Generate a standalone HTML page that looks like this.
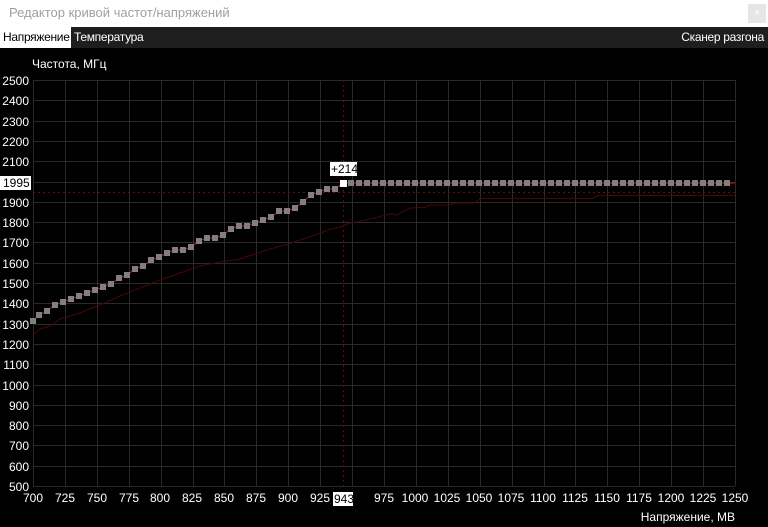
<!DOCTYPE html>
<html><head><meta charset="utf-8"><style>
body{margin:0;width:768px;height:527px;background:#000;overflow:hidden;font-family:"Liberation Sans",sans-serif;}
.title{position:absolute;left:0;top:0;width:768px;height:27px;background:#fff;}
.title span{position:absolute;left:9px;top:5px;font-size:13px;color:#a0a0a0;}
.close{position:absolute;left:748px;top:4px;width:18px;height:19px;background:#e6e6e6;color:#fff;font-size:10px;text-align:center;line-height:19px;}
.tabs{position:absolute;left:0;top:27px;width:768px;height:21px;background:#1e1e1e;font-size:12px;color:#fff;letter-spacing:-0.3px;}
.t1{position:absolute;left:0;top:0;height:21px;width:71px;background:#fff;color:#000;line-height:21px;padding-left:3px;box-sizing:border-box;}
.t2{position:absolute;left:74px;top:0;line-height:21px;}
.t3{position:absolute;right:4px;top:0;line-height:21px;}
svg{position:absolute;left:0;top:0;}
text{font-family:"Liberation Sans",sans-serif;font-size:12px;fill:#fff;}
</style></head><body>
<div class="title"><span>Редактор кривой частот/напряжений</span><div class="close">×</div></div>
<div class="tabs"><div class="t1">Напряжение</div><div class="t2">Температура</div><div class="t3">Сканер разгона</div></div>
<svg width="768" height="527" id="s">
<g id="grid" stroke="#2a2a2a" stroke-width="1"></g>
<text x="32" y="68">Частота, МГц</text>
<g text-anchor="end" id="yl">
<text x="29" y="85">2500</text><text x="29" y="105">2400</text><text x="29" y="126">2300</text><text x="29" y="146">2200</text><text x="29" y="166">2100</text><text x="29" y="207">1900</text><text x="29" y="227">1800</text><text x="29" y="247">1700</text><text x="29" y="268">1600</text><text x="29" y="288">1500</text><text x="29" y="308">1400</text><text x="29" y="329">1300</text><text x="29" y="349">1200</text><text x="29" y="369">1100</text><text x="29" y="390">1000</text><text x="29" y="410">900</text><text x="29" y="430">800</text><text x="29" y="450">700</text><text x="29" y="471">600</text><text x="29" y="491">500</text>
</g>
<g text-anchor="middle">
<text x="33" y="502">700</text><text x="65" y="502">725</text><text x="97" y="502">750</text><text x="129" y="502">775</text><text x="160" y="502">800</text><text x="192" y="502">825</text><text x="224" y="502">850</text><text x="256" y="502">875</text><text x="288" y="502">900</text><text x="320" y="502">925</text><text x="384" y="502">975</text><text x="415" y="502">1000</text><text x="447" y="502">1025</text><text x="479" y="502">1050</text><text x="511" y="502">1075</text><text x="543" y="502">1100</text><text x="575" y="502">1125</text><text x="607" y="502">1150</text><text x="639" y="502">1175</text><text x="671" y="502">1200</text><text x="703" y="502">1225</text><text x="735" y="502">1250</text>
</g>
<line x1="343.5" y1="80" x2="343.5" y2="486" stroke="#6a0a0a" stroke-dasharray="2,3"/>
<line x1="33" y1="192.5" x2="735" y2="192.5" stroke="#6a0a0a" stroke-dasharray="2,3"/>
<polyline fill="none" stroke="#4a0606" stroke-width="1" points="33,335 40,329 50,326 60,319 80,313 100,305 120,296 140,288 160,280 180,273 200,266 220,262 240,259 255,254 270,249 285,245 300,240 315,235 331,229 340,227 350,223 357,222 370,219 380,216.5 390,214 397,215 410,208 425,207.5 430,205 450,205 455,203 475,203 480,198.5 592,198.5 598,195.5 735,195.5"/>
<polyline id="rl" fill="none" stroke="#d01010" stroke-width="1"></polyline>
<g id="pts" fill="#808080"></g>
<rect x="333" y="492" width="20" height="14" fill="#fff"/><text x="334" y="503" style="fill:#000">943</text>
<rect x="0" y="176" width="31" height="14" fill="#fff"/><text x="3" y="187" style="fill:#000">1995</text>
<rect x="330" y="162" width="27" height="14" fill="#fff"/><text x="331" y="173" style="fill:#000">+214</text>
<text x="735" y="521" text-anchor="end">Напряжение, МВ</text>
</svg>
<script>
var g=document.getElementById('grid'),h='';
for(var i=0;i<=22;i++){var x=Math.round(33+i*702/22)+.5;h+='<line x1="'+x+'" y1="80" x2="'+x+'" y2="486"/>';}
for(var j=0;j<=20;j++){var y=Math.round(80+j*20.3)+.5;h+='<line x1="33" y1="'+y+'" x2="735" y2="'+y+'"/>';}
g.innerHTML=h;
var tb=[[33,321],[39,315],[47,311],[55,305],[63,302],[71,299],[79,296],[87,293],[95,290],[103,287],[111,284],[119,278],[127,275],[135,269],[143,266],[151,260],[159,257],[167,253],[175,250],[183,250],[191,247],[199,241],[207,238],[215,238],[223,235],[231,229],[239,226],[247,226],[255,223],[263,220],[271,217],[279,211],[287,211],[295,208],[303,202],[311,195],[319,192],[327,189],[335,189]];
var n=tb.length;
for(var x=351;x<=730;x+=8)tb.push([x,183]);
var p='',q='';
tb.forEach(function(a){p+='<rect x="'+(a[0]-3)+'" y="'+(a[1]-3)+'" width="6" height="6"/>';});
var all=tb.slice(0,n).concat([[343,183]]).concat(tb.slice(n));all.push([735,183]);
all.forEach(function(a){q+=a[0]+','+a[1]+' ';});
document.getElementById('pts').innerHTML=p+'<rect x="340" y="180" width="7" height="7" fill="#fff"/>';
document.getElementById('rl').setAttribute('points',q);
</script>
</body></html>
